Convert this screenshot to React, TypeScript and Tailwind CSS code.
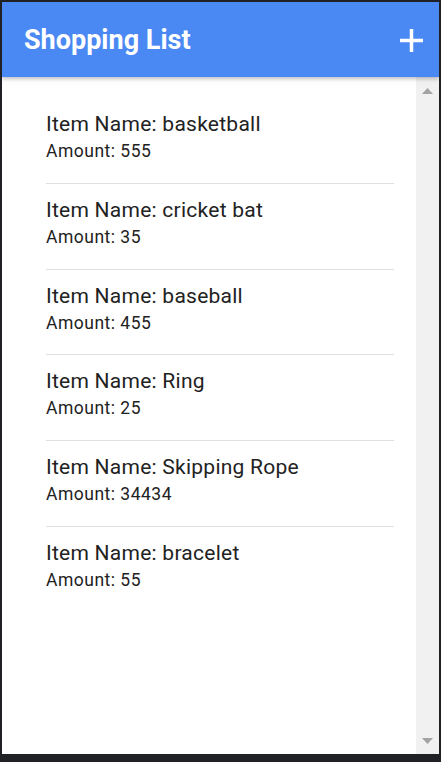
import React from "react";

const items = [
	{ name: "basketball", amount: 555 },
	{ name: "cricket bat", amount: 35 },
	{ name: "baseball", amount: 455 },
	{ name: "Ring", amount: 25 },
	{ name: "Skipping Rope", amount: 34434 },
	{ name: "bracelet", amount: 55 },
];

function PlusIcon() {
	return (
		<svg width="23" height="23" viewBox="0 0 23 23" fill="#ffffff">
			<rect x="9.75" y="0" width="3.5" height="23" />
			<rect x="0" y="9.75" width="23" height="3.5" />
		</svg>
	);
}

export default function App() {
	return (
		<div
			className="w-[441px] h-[762px] bg-[#202124] pt-[2px] pl-[2px] pr-[2px] pb-[8px]"
			style={{ fontFamily: "Roboto, 'Noto Sans', sans-serif" }}
		>
			<div className="w-full h-full flex flex-col bg-white overflow-hidden">
				{/* header */}
				<div className="relative z-10 h-[75px] shrink-0 flex items-center justify-between bg-[#4a89f3] pl-[22px] pr-[16px] shadow-[0_2px_4px_rgba(0,0,0,0.25)]">
					<h1 className="mt-[1px] text-[27px] font-bold text-white leading-none">Shopping List</h1>
					<div className="mt-[2px]">
						<PlusIcon />
					</div>
				</div>

				<div className="flex flex-1 min-h-0">
					{/* list */}
					<div className="flex-1 pt-[21px] pl-[44px] pr-[22px]">
						{items.map((item, i) => (
							<div
								key={i}
								className={
									"pt-[12px] pb-[18.75px] " +
									(i < items.length - 1 ? "border-b border-[#e0e0e0]" : "")
								}
							>
								<div className="text-[21px] leading-[28px] tracking-[0.25px] text-[#222222]">
									Item Name: {item.name}
								</div>
								<div className="mt-[1px] text-[17.5px] leading-[25px] tracking-[0.5px] text-[#222222]">
									Amount: {item.amount}
								</div>
							</div>
						))}
					</div>

					{/* scrollbar */}
					<div className="w-[23px] shrink-0 bg-[#f1f1f1] flex flex-col justify-between items-center pt-[11px] pb-[10px]">
						<svg width="11" height="6" viewBox="0 0 11 6">
							<polygon points="5.5,0 11,6 0,6" fill="#a3a3a3" />
						</svg>
						<svg width="11" height="6" viewBox="0 0 11 6">
							<polygon points="0,0 11,0 5.5,6" fill="#a3a3a3" />
						</svg>
					</div>
				</div>
			</div>
		</div>
	);
}
